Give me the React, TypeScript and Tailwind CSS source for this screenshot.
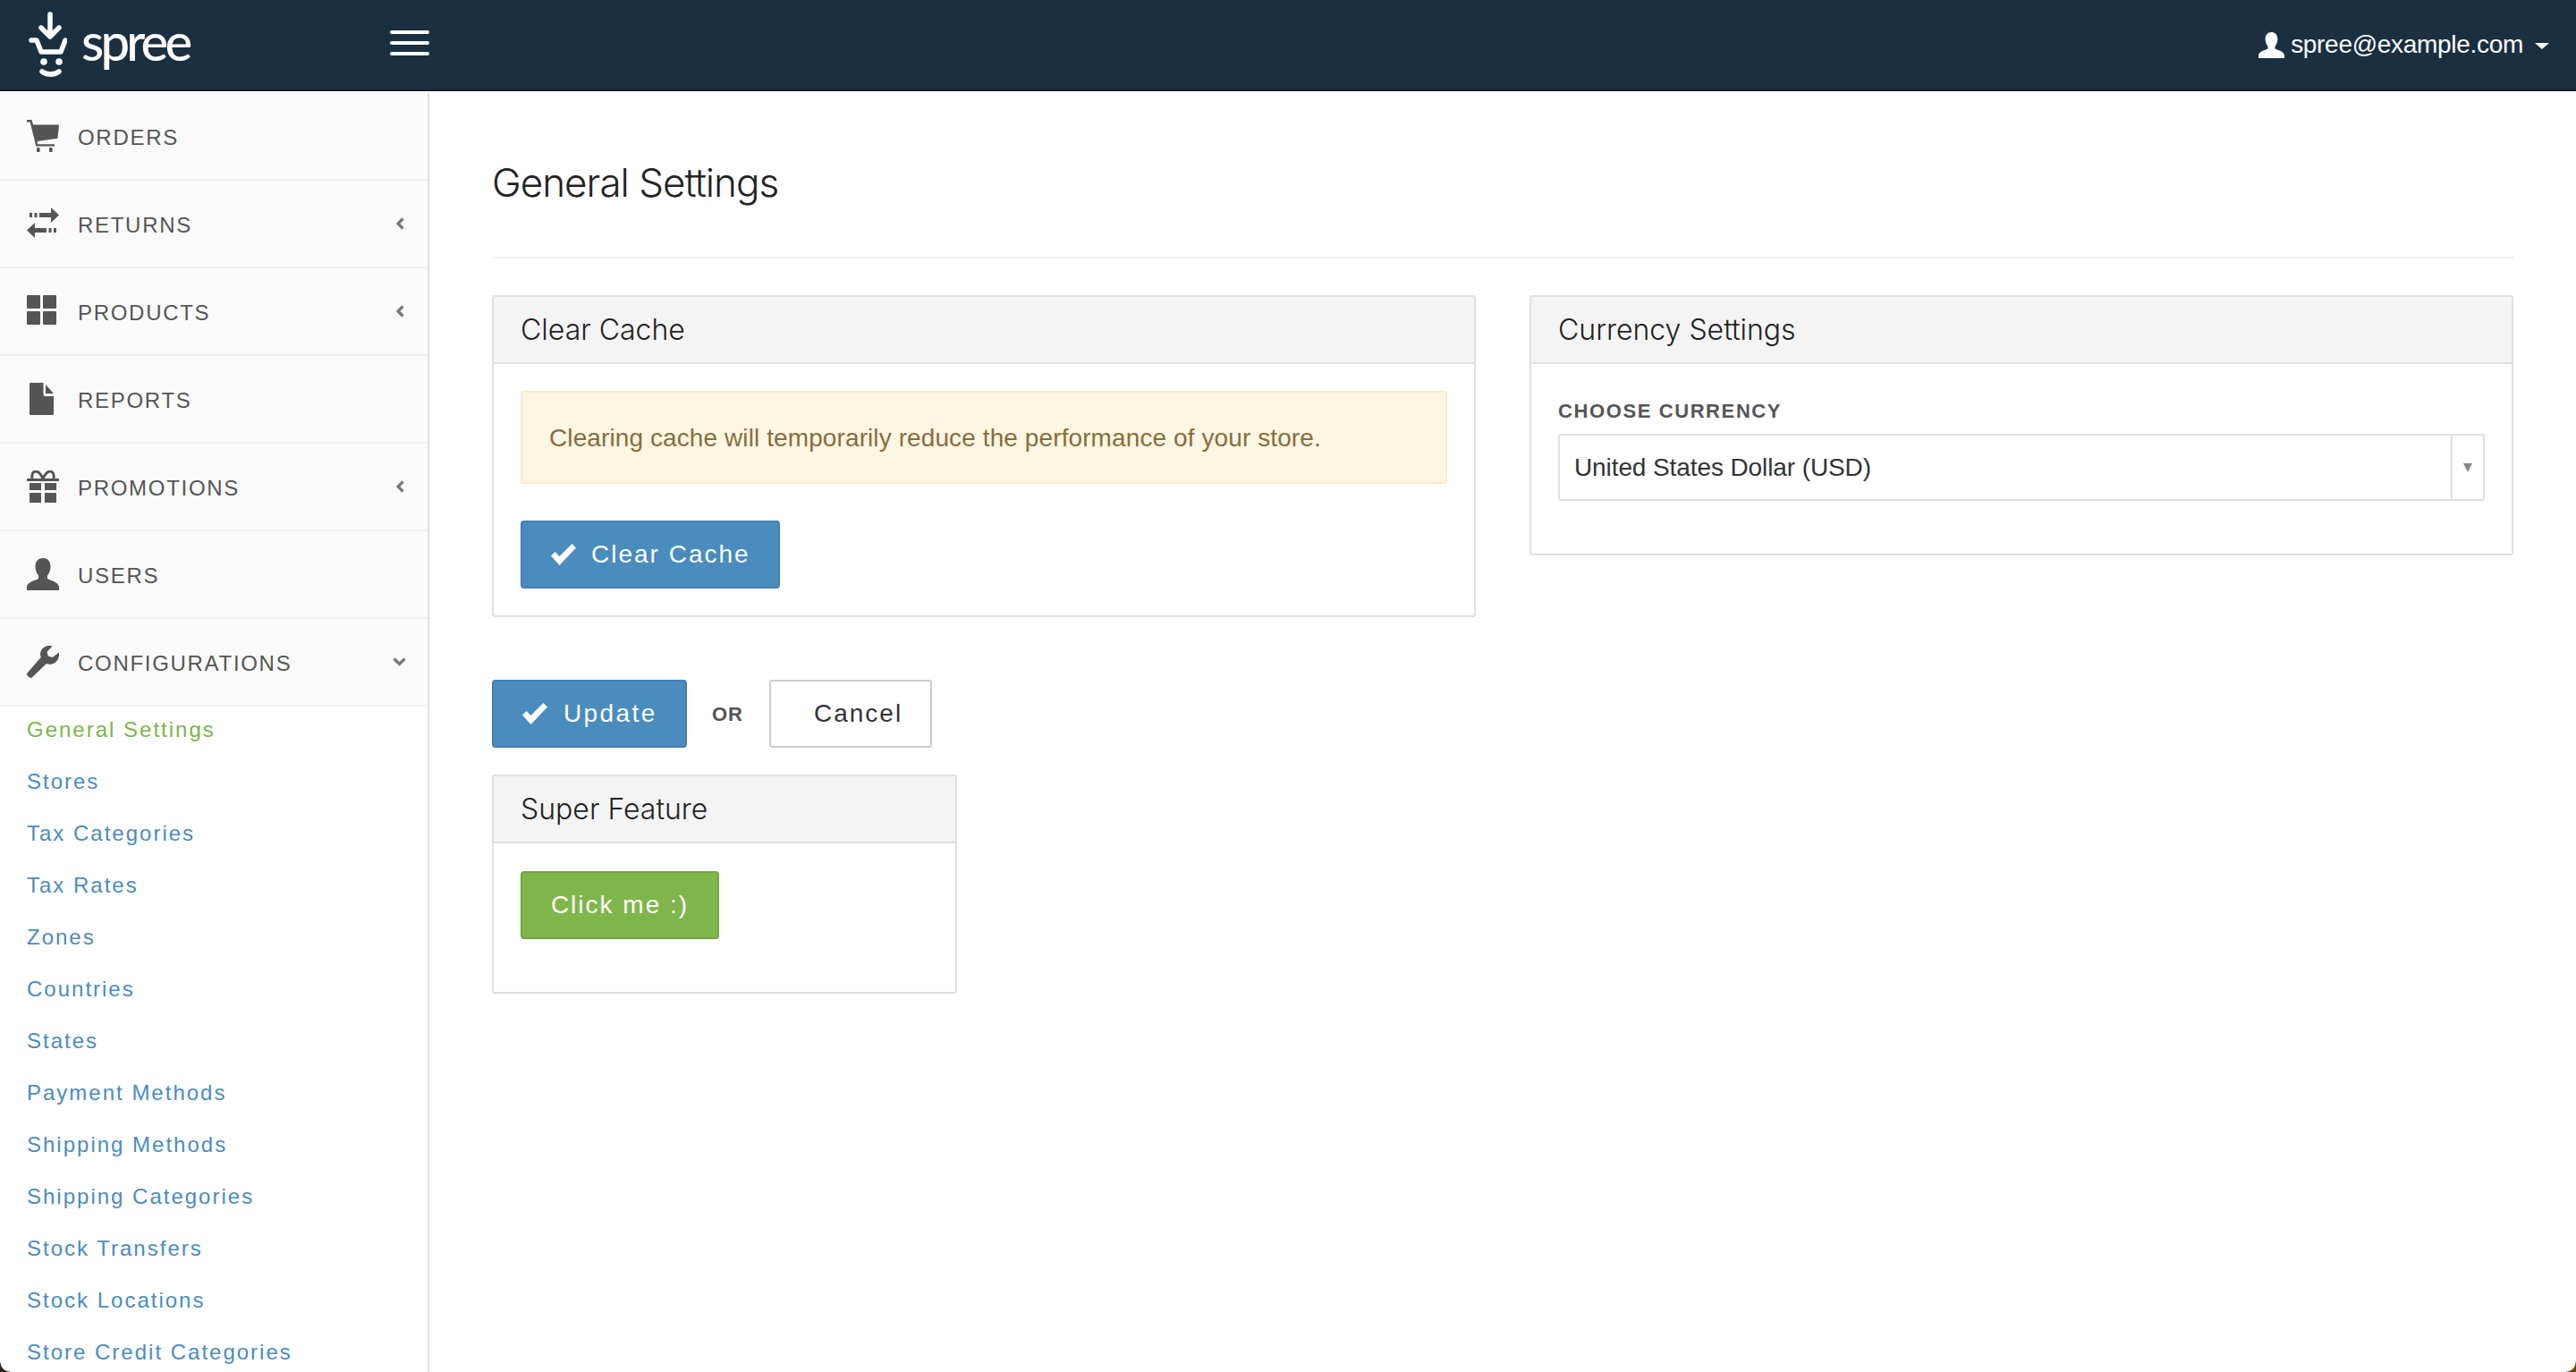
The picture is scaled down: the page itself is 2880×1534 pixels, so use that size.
import type { ReactNode } from 'react';

function IconBox({ children }: { children: ReactNode }) {
  return (
    <svg viewBox="0 0 36 36" className="h-9 w-9 shrink-0 fill-[#555]">
      {children}
    </svg>
  );
}

const CartIcon = () => (
  <IconBox>
    <path d="M0 0h5.500l1.600 5.500H36l-1.600 15.200L11.500 24l.7 3.200H31v2.300H10.300L3.600 2.400H0z" />
    <rect x="11" y="31" width="3.600" height="5" rx="1" />
    <rect x="25" y="31" width="3.600" height="5" rx="1" />
  </IconBox>
);

const TransferIcon = () => (
  <IconBox>
    <path d="M14 6h13V0l9 8.500-9 8.500v-6H14z" />
    <rect x="3" y="6" width="3" height="5" />
    <rect x="8.500" y="6" width="3" height="5" />
    <path d="M22 23H9v-6l-9 8.500L9 34v-6h13z" />
    <rect x="24.500" y="23" width="3" height="5" />
    <rect x="30" y="23" width="3" height="5" />
  </IconBox>
);

const GridIcon = () => (
  <IconBox>
    <rect x="0" y="0" width="15" height="15" rx="1" />
    <rect x="18" y="0" width="15" height="15" rx="1" />
    <rect x="0" y="18" width="15" height="15" rx="1" />
    <rect x="18" y="18" width="15" height="15" rx="1" />
  </IconBox>
);

const FileIcon = () => (
  <IconBox>
    <path d="M3 1a1 1 0 0 1 1-1h14.500v13a2 2 0 0 0 2 2H30v20a1 1 0 0 1-1 1H4a1 1 0 0 1-1-1z" />
    <path d="M21 2l9 10h-9z" />
  </IconBox>
);

const GiftIcon = () => (
  <IconBox>
    <path d="M0 9h36v3H0z" />
    <path
      d="M6 9 C5 3 8 1 10 1 C13 1 16 5 18 9 C20 5 23 1 26 1 C28 1 31 3 30 9"
      fill="none"
      stroke="#555"
      strokeWidth="3"
    />
    <rect x="3" y="14" width="13" height="8" />
    <rect x="20" y="14" width="13" height="8" />
    <rect x="3" y="25" width="13" height="11" />
    <rect x="20" y="25" width="13" height="11" />
  </IconBox>
);

const UserIcon = ({ className = 'h-9 w-9 fill-[#555]' }: { className?: string }) => (
  <svg viewBox="0 0 36 36" className={`shrink-0 ${className}`}>
    <path d="M18 0c5.500 0 8.500 4 8.500 9.500 0 4-1.500 7.500-3.500 10v3.500c3 2 13 3.500 13 9.500V36H0v-3.500c0-6 10-7.500 13-9.500v-3.500c-2-2.500-3.500-6-3.500-10C9.500 4 12.500 0 18 0z" />
  </svg>
);

const WrenchIcon = () => (
  <IconBox>
    <path d="M35.800 7.500l-7 5.500-5-1.500-1.200-4.800L28.500.5C24-1 19 .5 16.500 4.500c-1.700 2.700-1.800 6-.8 8.500L.5 30.500c-.7.800-.7 2 0 2.700l2.500 2.300c.8.700 2 .7 2.700-.1L22 20c3 1.200 6.600 1 9.500-1 3.700-2.500 5.200-7.200 4.300-11.500z" />
  </IconBox>
);

const CheckIcon = () => (
  <svg viewBox="0 0 28 24" className="h-6 w-7 shrink-0 fill-white">
    <path d="M0 13.500l4.500-4.500 5 5L23.500 0 28 4.500 9.500 24z" />
  </svg>
);

const ChevronLeft = () => (
  <svg viewBox="0 0 10 14" className="h-[14px] w-[10px] fill-none stroke-[#777] stroke-[3.2]">
    <path d="M8.500 1.500 3 7l5.500 5.500" />
  </svg>
);

const ChevronDown = () => (
  <svg viewBox="0 0 15 10" className="h-[10px] w-[15px] fill-none stroke-[#777] stroke-[3.2]">
    <path d="M1.500 1.500 7.500 7.500l6-6" />
  </svg>
);

function SpreeLogo() {
  return (
    <div className="flex w-[212px] shrink-0 items-start">
      <svg
        viewBox="0 0 44 74"
        className="mt-[13px] ml-[31px] h-[74px] w-[44px] fill-none stroke-white stroke-[5.500]"
        strokeLinecap="round"
        strokeLinejoin="round"
      >
        <path d="M25 3v25M15 18l10 10 10-10" />
        <path d="M4 32h6l5 13h22l5-13" />
        <circle cx="18" cy="56" r="3.800" className="fill-white stroke-none" />
        <circle cx="35" cy="56" r="3.800" className="fill-white stroke-none" />
        <path d="M16 67c5 4 14 4 19 0" />
      </svg>
      <span className="mt-[17px] ml-[16px] font-['Lato',sans-serif] text-[58px] leading-[58px] tracking-[-3.800px] font-medium text-white">
        spree
      </span>
    </div>
  );
}

const navItems = [
  { label: 'ORDERS', icon: <CartIcon /> },
  { label: 'RETURNS', icon: <TransferIcon />, arrow: 'left' },
  { label: 'PRODUCTS', icon: <GridIcon />, arrow: 'left' },
  { label: 'REPORTS', icon: <FileIcon /> },
  { label: 'PROMOTIONS', icon: <GiftIcon />, arrow: 'left' },
  { label: 'USERS', icon: <UserIcon /> },
  { label: 'CONFIGURATIONS', icon: <WrenchIcon />, arrow: 'down' },
];

const subItems = [
  'General Settings',
  'Stores',
  'Tax Categories',
  'Tax Rates',
  'Zones',
  'Countries',
  'States',
  'Payment Methods',
  'Shipping Methods',
  'Shipping Categories',
  'Stock Transfers',
  'Stock Locations',
  'Store Credit Categories',
];

function Sidebar() {
  return (
    <aside className="mt-[2px] h-full w-[480px] shrink-0 overflow-hidden border-r-2 border-[#e2e2e2] bg-white">
      {navItems.map((item) => (
        <div
          key={item.label}
          className="flex h-[98px] items-center border-b-2 border-[#f0f0f0] bg-[#fafafa] pr-[24px] pl-[30px] text-[24px] tracking-[1.700px] text-[#555]"
        >
          {item.icon}
          <span className="ml-[21px] flex-1 pt-[3px]">{item.label}</span>
          {item.arrow === 'left' && <span className="mr-[2px]"><ChevronLeft /></span>}
          {item.arrow === 'down' && <ChevronDown />}
        </div>
      ))}
      <ul className="flex flex-col gap-[24px] pt-[9px] pl-[30px]">
        {subItems.map((name, i) => (
          <li
            key={name}
            className={`text-[24px] leading-[34px] tracking-[2px] ${i === 0 ? 'text-[#7ab648]' : 'text-[#4a8cbe]'}`}
          >
            {name}
          </li>
        ))}
      </ul>
    </aside>
  );
}

function Panel({ title, className, children }: { title: string; className: string; children: ReactNode }) {
  return (
    <section className={`rounded-[3px] border-2 border-[#e0e0e0] bg-white ${className}`}>
      <h3 className="flex h-[75px] items-center border-b-2 border-[#e0e0e0] bg-[#f4f4f4] px-[30px] font-['Inter',sans-serif] text-[32px] font-light text-[#222]">
        {title}
      </h3>
      {children}
    </section>
  );
}

const blueBtn =
  'flex h-[76px] items-center rounded-[4px] border-2 border-[#417fb0] bg-[#4a8cbe] text-[28px] tracking-[2px] text-white';

export default function App() {
  return (
    <div className="relative flex h-[1534px] w-[2880px] flex-col overflow-hidden bg-white font-['Liberation_Sans',sans-serif]">
      <header className="flex h-[102px] shrink-0 items-start border-b-2 border-[#0d1a24] bg-[#1a2f40]">
        <SpreeLogo />
        <div className="mt-[34px] ml-[224px] flex w-[44px] flex-col gap-[8px]">
          <span className="h-[4px] rounded-[2px] bg-white" />
          <span className="h-[4px] rounded-[2px] bg-white" />
          <span className="h-[4px] rounded-[2px] bg-white" />
        </div>
        <div className="ml-auto flex h-[100px] items-center pr-[30px] text-[28px] tracking-[-0.300px] text-white">
          <UserIcon className="h-[29px] w-[29px] fill-white" />
          <span className="ml-[7px]">spree@example.com</span>
          <span className="mt-[2px] ml-[13px] h-0 w-0 border-x-[8px] border-t-[7px] border-x-transparent border-t-white" />
        </div>
      </header>

      <div className="flex min-h-0 flex-1">
        <Sidebar />
        <main className="flex-1 px-[70px]">
          <h1 className="flex h-[187px] items-center border-b-2 border-[#eeeeee] pt-[18px] font-['Inter',sans-serif] text-[44px] font-light tracking-[-1px] text-[#222]">
            General Settings
          </h1>

          <div className="mt-[41px] flex items-start gap-[60px]">
            <Panel title="Clear Cache" className="h-[360px] w-[1100px]">
              <div className="px-[30px] pt-[30px]">
                <div className="flex h-[104px] items-center rounded-[3px] border-2 border-[#faebcc] bg-[#fdf6e3] px-[30px] pt-[2px] text-[28px] tracking-[0.100px] text-[#8a6d3b]">
                  Clearing cache will temporarily reduce the performance of your store.
                </div>
                <button className={`mt-[41px] w-[290px] pl-[32px] ${blueBtn}`}>
                  <CheckIcon />
                  <span className="ml-[17px]">Clear Cache</span>
                </button>
              </div>
            </Panel>

            <Panel title="Currency Settings" className="h-[291px] w-[1100px]">
              <div className="px-[30px] pt-[40px]">
                <label className="block text-[22px] leading-[26px] font-bold tracking-[1.600px] text-[#555]">
                  CHOOSE CURRENCY
                </label>
                <div className="mt-[12px] flex h-[75px] items-center rounded-[3px] border-2 border-[#e0e0e0] text-[28px] tracking-[-0.100px] text-[#333]">
                  <span className="flex-1 pl-[16px]">United States Dollar (USD)</span>
                  <span className="flex h-full w-[36px] items-center justify-center border-l-2 border-[#e0e0e0]">
                    <span className="h-0 w-0 border-x-[5px] border-t-[10px] border-x-transparent border-t-[#888]" />
                  </span>
                </div>
              </div>
            </Panel>
          </div>

          <div className="mt-[70px] flex items-center">
            <button className={`w-[218px] pl-[32px] ${blueBtn}`}>
              <CheckIcon />
              <span className="ml-[18px] tracking-[2.400px]">Update</span>
            </button>
            <span className="ml-[28px] w-[36px] text-[22px] font-bold tracking-[1px] text-[#555]">OR</span>
            <button className="ml-[28px] h-[76px] w-[182px] rounded-[3px] border-2 border-[#ccc] pl-[48px] text-left text-[28px] tracking-[2px] text-[#333]">
              Cancel
            </button>
          </div>

          <Panel title="Super Feature" className="mt-[30px] h-[245px] w-[520px]">
            <div className="px-[30px] pt-[31px]">
              <button className="h-[76px] w-[222px] rounded-[4px] border-2 border-[#70a53f] bg-[#7fb64c] text-[28px] tracking-[2px] text-white">
                Click me :)
              </button>
            </div>
          </Panel>
        </main>
      </div>

      {/* window corners from the original capture */}
      <div className="absolute bottom-0 left-0 h-[11px] w-[11px] bg-[radial-gradient(circle_at_100%_0,transparent_10px,#33231c_11px)]" />
      <div className="absolute right-0 bottom-0 h-[11px] w-[11px] bg-[radial-gradient(circle_at_0_0,transparent_10px,#6b4a10_11px)]" />
    </div>
  );
}
